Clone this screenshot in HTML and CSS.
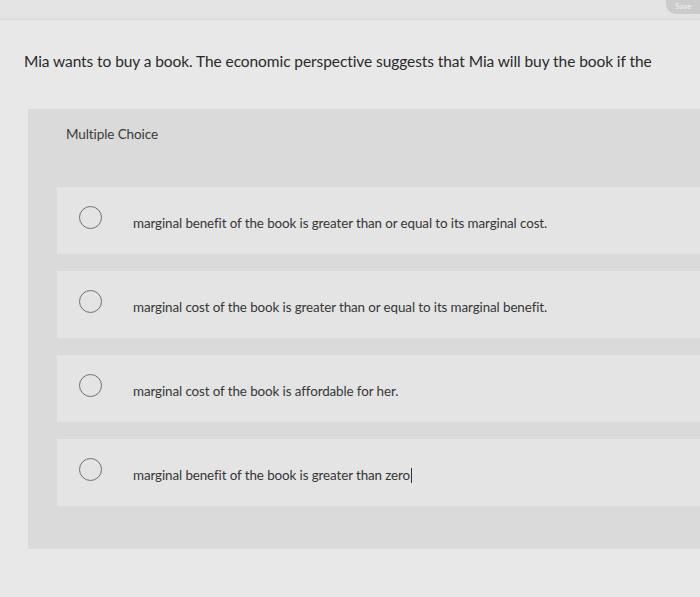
FILE: index.html
```html
<!DOCTYPE html>
<html lang="en">
<head>
<meta charset="utf-8">
<title>Multiple Choice</title>
<link rel="stylesheet" href="styles.css">
</head>
<body>
  <div class="topbar">
    <div class="save-btn">Save</div>
  </div>
  <p class="question">Mia wants to buy a book. The economic perspective suggests that Mia will buy the book if the</p>
  <section class="panel">
    <div class="panel-head">Multiple Choice</div>
    <div class="options">
      <label class="option"><span class="radio"></span><span class="opt-text">marginal benefit of the book is greater than or equal to its marginal cost.</span></label>
      <label class="option"><span class="radio"></span><span class="opt-text">marginal cost of the book is greater than or equal to its marginal benefit.</span></label>
      <label class="option"><span class="radio"></span><span class="opt-text">marginal cost of the book is affordable for her.</span></label>
      <label class="option"><span class="radio"></span><span class="opt-text">marginal benefit of the book is greater than zero<span class="caret"></span></span></label>
    </div>
  </section>
</body>
</html>
```
FILE: styles.css
```css
* { box-sizing: border-box; }
html, body { margin: 0; padding: 0; }
body {
  background: #e8e8e8;
  font-family: "Lato", "Liberation Sans", sans-serif;
  color: #2e2e2e;
  width: 700px;
  height: 597px;
  overflow: hidden;
}
.topbar {
  height: 20px;
  background: #e4e4e4;
  border-bottom: 1px solid #d8d8d8;
  display: flex;
  justify-content: flex-end;
}
.save-btn {
  width: 34px;
  height: 14px;
  background: #cbcbcb;
  border-radius: 0 0 0 10px;
  color: #f2f2f2;
  font-size: 8px;
  line-height: 12px;
  padding-left: 9px;
  white-space: nowrap;
}
.question {
  margin: 31px 0 0 24px;
  font-size: 15.5px;
  line-height: 20px;
  color: #2a2a2a;
  letter-spacing: -0.08px;
}
.panel {
  margin: 38px 0 0 28px;
  background: #dadada;
  padding-bottom: 43px;
}
.panel-head {
  height: 78px;
  padding: 15px 0 0 38px;
  font-size: 13.5px;
  line-height: 20px;
  color: #3a3a3a;
  letter-spacing: -0.1px;
}
.options {
  display: flex;
  flex-direction: column;
  gap: 17px;
  padding-left: 29px;
}
.option {
  height: 67px;
  background: #e4e4e4;
  display: flex;
  align-items: center;
  padding-left: 22px;
}
.radio {
  width: 23px;
  height: 23px;
  border: 1.5px solid #6f6f6f;
  border-radius: 50%;
  flex: none;
  margin-top: -6px;
}
.opt-text {
  margin-left: 31px;
  padding-top: 5px;
  font-size: 13.4px;
  color: #363636;
  letter-spacing: -0.1px;
}
.caret {
  display: inline-block;
  width: 1px;
  height: 15px;
  background: #333;
  vertical-align: -3px;
  margin-left: 1px;
}
```
